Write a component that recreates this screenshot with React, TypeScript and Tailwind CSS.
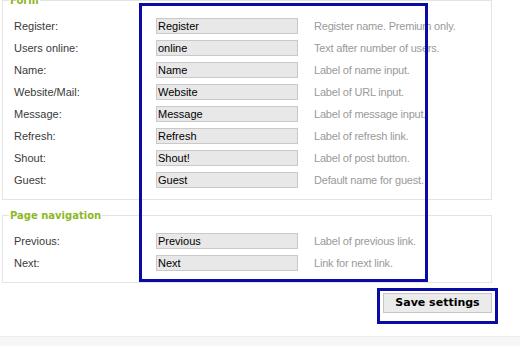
const formRows = [
  { label: "Register:", value: "Register", hint: "Register name. Premium only." },
  { label: "Users online:", value: "online", hint: "Text after number of users." },
  { label: "Name:", value: "Name", hint: "Label of name input." },
  { label: "Website/Mail:", value: "Website", hint: "Label of URL input." },
  { label: "Message:", value: "Message", hint: "Label of message input." },
  { label: "Refresh:", value: "Refresh", hint: "Label of refresh link." },
  { label: "Shout:", value: "Shout!", hint: "Label of post button." },
  { label: "Guest:", value: "Guest", hint: "Default name for guest." },
];

const navRows = [
  { label: "Previous:", value: "Previous", hint: "Label of previous link." },
  { label: "Next:", value: "Next", hint: "Link for next link." },
];

type Row = { label: string; value: string; hint: string };

const SettingRow = ({ row }: { row: Row }) => (
  <div className="flex h-[22px] items-center pl-[5px]">
    <label className="w-[142px] text-[11px] text-[#3a3a3a]">{row.label}</label>
    <input
      readOnly
      value={row.value}
      className="h-[16px] w-[142px] border border-[#c9c9c9] bg-[#e8e8e8] px-[1px] text-[11px] text-black outline-none"
    />
    <span className="ml-[16px] text-[11px] tracking-[-0.2px] text-[#9a9a9a]">{row.hint}</span>
  </div>
);

const Group = ({ title, rows, className }: { title: string; rows: Row[]; className?: string }) => (
  <fieldset className={`border border-[#e4e4e4] pl-[6px] pt-[8px] pb-[8px] ${className ?? ""}`}>
    <legend className="px-[1px] font-['DejaVu_Sans',sans-serif] text-[10px] font-bold leading-[13px] text-[#8cb82a]">
      {title}
    </legend>
    {rows.map((row) => (
      <SettingRow key={row.label} row={row} />
    ))}
  </fieldset>
);

export default function App() {
  return (
    <div className="relative h-[346px] w-[520px] overflow-hidden bg-white font-['Liberation_Sans',Arial,sans-serif]">
      <div className="mt-[-6px] w-[490px] ml-[2px]">
        <Group title="Form" rows={formRows} />
        <Group title="Page navigation" rows={navRows} className="mt-[9px]" />
        <div className="mt-[10px] flex justify-end">
          <button className="h-[20px] w-[109px] border border-[#c6c6c6] bg-[#ebebeb] font-['DejaVu_Sans',sans-serif] text-[11px] font-bold text-black">
            Save settings
          </button>
        </div>
      </div>

      <div className="absolute bottom-0 left-0 right-0 h-[10px] border-t border-[#eeeeee] bg-[#f6f6f6]" />

      {/* annotation boxes */}
      <div className="pointer-events-none absolute left-[139px] top-[3px] h-[279px] w-[289px] border-[3px] border-[#0a0aa5]" />
      <div className="pointer-events-none absolute left-[377px] top-[288px] h-[36px] w-[121px] border-[3px] border-[#0a0aa5]" />
    </div>
  );
}
